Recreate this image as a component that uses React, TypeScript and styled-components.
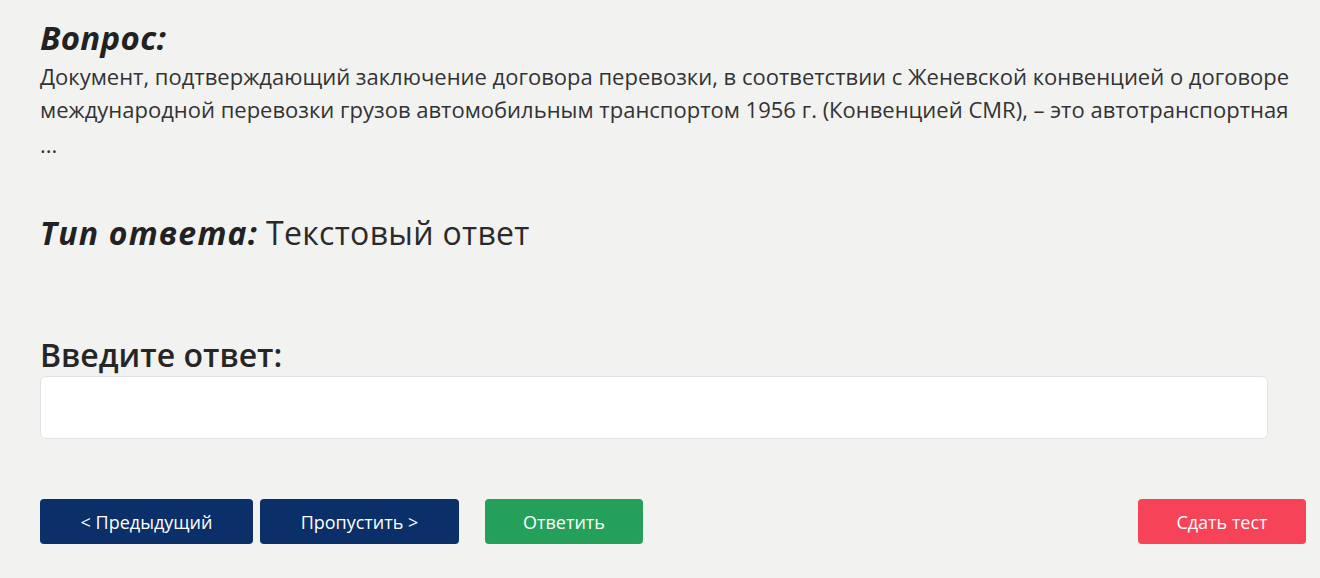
import React, { useState } from "react";
import styled, { createGlobalStyle } from "styled-components";

const GlobalStyle = createGlobalStyle`
  body {
    margin: 0;
    background: #f2f2f1;
    font-family: "Open Sans", "Noto Sans", sans-serif;
    color: #262626;
  }
`;

const Page = styled.div`
  padding: 18px 14px 0 40px;
  display: flex;
  flex-direction: column;
`;

const Heading = styled.h2`
  margin: 0;
  font-size: 33px;
  line-height: 40px;
  font-weight: 700;
  font-style: italic;
  color: #222;
  letter-spacing: 0.3px;
`;

const QuestionText = styled.p`
  margin: 2px 0 0;
  font-size: 22px;
  line-height: 33px;
  color: #333;
`;

const Ellipsis = styled.span`
  display: block;
  margin-top: 2px;
`;

const AnswerType = styled.div`
  margin-top: 50px;
  display: flex;
  align-items: baseline;
  gap: 8px;
  font-size: 32px;
  line-height: 44px;
`;

const TypeLabel = styled.span`
  font-weight: 700;
  font-style: italic;
  color: #222;
  letter-spacing: 1.2px;
`;

const TypeValue = styled.span`
  font-weight: 400;
  color: #2a2a2a;
  letter-spacing: 0.3px;
`;

const InputLabel = styled.label`
  margin-top: 80px;
  font-size: 32px;
  line-height: 40px;
  font-weight: 600;
  color: #262626;
`;

const AnswerInput = styled.input`
  box-sizing: border-box;
  width: 1228px;
  height: 63px;
  margin-top: 1px;
  background: #fff;
  border: 1px solid #e3e3e3;
  border-radius: 6px;
  padding: 0 14px;
  font-family: inherit;
  font-size: 18px;
  outline: none;
`;

const Actions = styled.div`
  margin-top: 60px;
  display: flex;
  align-items: center;
`;

const Button = styled.button<{ $tone: "navy" | "green" | "red"; $w: number; $gap?: number }>`
  width: ${(p) => p.$w}px;
  height: 45px;
  margin-left: ${(p) => p.$gap ?? 0}px;
  border: none;
  border-radius: 4px;
  font-family: inherit;
  font-size: 18px;
  color: #fff;
  cursor: pointer;
  background: ${(p) =>
    p.$tone === "navy" ? "#0b2f68" : p.$tone === "green" ? "#24a05a" : "#f64358"};
`;

const Spacer = styled.div`
  flex: 1;
`;

export default function App() {
  const [answer, setAnswer] = useState("");
  return (
    <>
      <GlobalStyle />
      <Page>
        <Heading>Вопрос:</Heading>
        <QuestionText>
          Документ, подтверждающий заключение договора перевозки, в соответствии с Женевской
          конвенцией о договоре международной перевозки грузов автомобильным транспортом 1956 г.
          (Конвенцией CMR), – это автотранспортная
          <Ellipsis>...</Ellipsis>
        </QuestionText>
        <AnswerType>
          <TypeLabel>Тип ответа:</TypeLabel>
          <TypeValue>Текстовый ответ</TypeValue>
        </AnswerType>
        <InputLabel htmlFor="answer">Введите ответ:</InputLabel>
        <AnswerInput id="answer" value={answer} onChange={(e) => setAnswer(e.target.value)} />
        <Actions>
          <Button $tone="navy" $w={213}>&lt; Предыдущий</Button>
          <Button $tone="navy" $w={199} $gap={7}>Пропустить &gt;</Button>
          <Button $tone="green" $w={158} $gap={26}>Ответить</Button>
          <Spacer />
          <Button $tone="red" $w={168}>Сдать тест</Button>
        </Actions>
      </Page>
    </>
  );
}
